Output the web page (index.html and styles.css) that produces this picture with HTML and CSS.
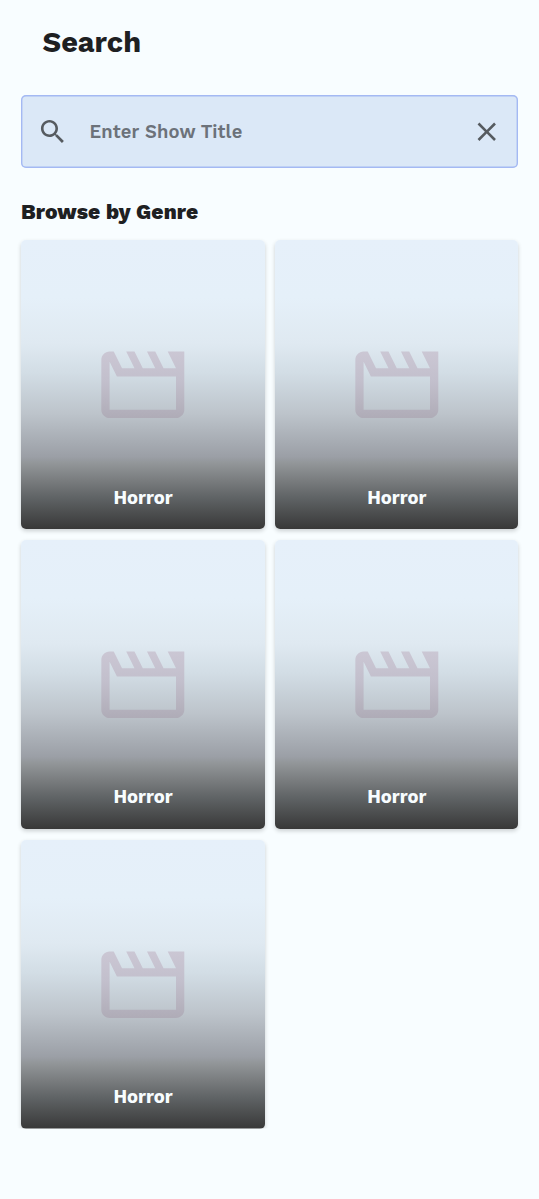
FILE: index.html
```html
<!DOCTYPE html>
<html lang="en">
<head>
<meta charset="utf-8">
<title>Search</title>
<link rel="stylesheet" href="styles.css">
</head>
<body>
<svg class="defs" width="0" height="0" aria-hidden="true">
  <linearGradient id="film" x1="0" y1="0" x2="0" y2="1">
    <stop offset="0" stop-color="#cbc7d4"/>
    <stop offset=".45" stop-color="#c2bfcc"/>
    <stop offset="1" stop-color="#afacb7"/>
  </linearGradient>
  <symbol id="movie" viewBox="0 0 24 24">
    <path fill="url(#film)" d="M4 6.47 5.76 10H20v8H4V6.47M22 4h-4l2 4h-3l-2-4h-2l2 4h-3l-2-4H8l2 4H7L5 4H4c-1.1 0-1.99.9-1.99 2L2 18c0 1.1.9 2 2 2h16c1.1 0 2-.9 2-2V4z"/>
  </symbol>
</svg>
<header class="header"><h1 class="title">Search</h1></header>
<main class="content">
  <div class="search">
    <svg class="search-icon" viewBox="0 0 24 24"><path d="M15.5 14h-.79l-.28-.27C15.41 12.59 16 11.11 16 9.5 16 5.91 13.09 3 9.5 3S3 5.91 3 9.5 5.91 16 9.5 16c1.61 0 3.09-.59 4.23-1.57l.27.28v.79l5 4.99L20.49 19l-4.99-5zm-6 0C7.01 14 5 11.99 5 9.5S7.01 5 9.5 5 14 7.01 14 9.5 11.99 14 9.5 14z"/></svg>
    <span class="placeholder">Enter Show Title</span>
    <svg class="search-icon" viewBox="0 0 24 24"><path d="M19 6.41 17.59 5 12 10.59 6.41 5 5 6.41 10.59 12 5 17.59 6.41 19 12 13.41 17.59 19 19 17.59 13.41 12z"/></svg>
  </div>
  <h2 class="subtitle">Browse by Genre</h2>
  <div class="grid">
    <div class="card"><svg class="movie"><use href="#movie"/></svg><span class="genre">Horror</span></div>
    <div class="card"><svg class="movie"><use href="#movie"/></svg><span class="genre">Horror</span></div>
    <div class="card"><svg class="movie"><use href="#movie"/></svg><span class="genre">Horror</span></div>
    <div class="card"><svg class="movie"><use href="#movie"/></svg><span class="genre">Horror</span></div>
    <div class="card"><svg class="movie"><use href="#movie"/></svg><span class="genre">Horror</span></div>
  </div>
</main>
</body>
</html>
```
FILE: styles.css
```css
* { box-sizing: border-box; }
body {
  margin: 0;
  min-height: 1199px;
  background: #f8fdff;
  color: #1e2022;
  font-family: "Work Sans", "Open Sans", "Noto Sans", sans-serif;
}
.defs { display: block; height: 0; }
.header {
  height: 84px;
  padding-left: 42.5px;
  display: flex;
  align-items: center;
}
.title { margin: 0; font-size: 28.9px; font-weight: 700; line-height: 40px; }
.content { padding: 10.5px 21px 0; }
.search {
  height: 73.5px;
  padding: 0 15.5px 0 16px;
  display: flex;
  align-items: center;
  border-radius: 5px;
  background: #dbe8f7;
  box-shadow: inset 0 0 0 1.4px #a4b9f3;
}
.search-icon { width: 31.5px; height: 31.5px; flex: none; fill: #565b60; }
.placeholder {
  flex: 1;
  padding: 1px 0 0 21px;
  color: #6c727a;
  font-size: 18.4px;
  font-weight: 600;
  line-height: 26px;
  letter-spacing: .15px;
}
.subtitle { margin: 27.8px 0 13.6px; font-size: 21px; font-weight: 800; line-height: 31px; letter-spacing: .1px; }
.grid {
  display: grid;
  grid-template-columns: 243.5px 243px;
  grid-auto-rows: 289px;
  gap: 10.6px 10.5px;
}
.card {
  display: flex;
  flex-direction: column;
  align-items: center;
  padding-top: 95.1px;
  border-radius: 5px;
  background: linear-gradient(#e6f0fa 0%, #e5f0f9 20%, #dfe9f1 36%, #d2dde5 46%, #bdc4cb 60%, #9b9fa6 75%, #93979a 77%, #7a7d7f 83%, #606466 89%, #383838 100%);
  box-shadow: 0 2px 4px rgba(0, 0, 0, .18);
}
.card:last-child { clip-path: inset(-2px -6px 0); }
.movie { width: 99.6px; height: 99.6px; flex: none; }
.genre {
  margin: 49.8px 0 0 .6px;
  color: #f8fdff;
  font-size: 18.4px;
  font-weight: 700;
  line-height: 26px;
}
```
